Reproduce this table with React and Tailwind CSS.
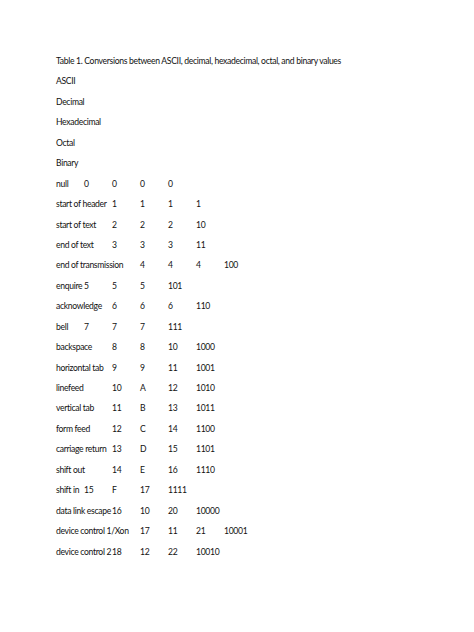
import React from "react";

const headings = ["ASCII", "Decimal", "Hexadecimal", "Octal", "Binary"];

// each cell: [text, tab stop index] (stops every 28px from the left margin)
const rows = [
  [["null", 0], ["0", 1], ["0", 2], ["0", 3], ["0", 4]],
  [["start of header", 0], ["1", 2], ["1", 3], ["1", 4], ["1", 5]],
  [["start of text", 0], ["2", 2], ["2", 3], ["2", 4], ["10", 5]],
  [["end of text", 0], ["3", 2], ["3", 3], ["3", 4], ["11", 5]],
  [["end of transmission", 0], ["4", 3], ["4", 4], ["4", 5], ["100", 6]],
  [["enquire", 0], ["5", 1], ["5", 2], ["5", 3], ["101", 4]],
  [["acknowledge", 0], ["6", 2], ["6", 3], ["6", 4], ["110", 5]],
  [["bell", 0], ["7", 1], ["7", 2], ["7", 3], ["111", 4]],
  [["backspace", 0], ["8", 2], ["8", 3], ["10", 4], ["1000", 5]],
  [["horizontal tab", 0], ["9", 2], ["9", 3], ["11", 4], ["1001", 5]],
  [["linefeed", 0], ["10", 2], ["A", 3], ["12", 4], ["1010", 5]],
  [["vertical tab", 0], ["11", 2], ["B", 3], ["13", 4], ["1011", 5]],
  [["form feed", 0], ["12", 2], ["C", 3], ["14", 4], ["1100", 5]],
  [["carriage return", 0], ["13", 2], ["D", 3], ["15", 4], ["1101", 5]],
  [["shift out", 0], ["14", 2], ["E", 3], ["16", 4], ["1110", 5]],
  [["shift in", 0], ["15", 1], ["F", 2], ["17", 3], ["1111", 4]],
  [["data link escape", 0], ["16", 2], ["10", 3], ["20", 4], ["10000", 5]],
  [["device control 1/Xon", 0], ["17", 3], ["11", 4], ["21", 5], ["10001", 6]],
  [["device control 2", 0], ["18", 2], ["12", 3], ["22", 4], ["10010", 5]],
];

const colStart = [
  "col-start-1",
  "col-start-2",
  "col-start-3",
  "col-start-4",
  "col-start-5",
  "col-start-6",
  "col-start-7",
  "col-start-8",
];

function Line({ children }) {
  return <p className="h-[20.45px] leading-[20.45px] whitespace-nowrap">{children}</p>;
}

export default function App() {
  return (
    <div
      className="w-[474px] h-[632px] bg-white text-[#111] pl-[56px] pt-[51px] text-[8.6px] tracking-[-0.32px] overflow-hidden"
      style={{ fontFamily: "Lato, 'Liberation Sans', sans-serif" }}
    >
      <Line>Table 1. Conversions between ASCII, decimal, hexadecimal, octal, and binary values</Line>
      {headings.map((h) => (
        <Line key={h}>{h}</Line>
      ))}
      {rows.map((row, i) => (
        <div
          key={i}
          className="grid grid-cols-[repeat(8,28px)] h-[20.45px] leading-[20.45px]"
        >
          {row.map(([text, stop], j) => (
            <span key={j} className={`${colStart[stop]} row-start-1 whitespace-nowrap`}>
              {text}
            </span>
          ))}
        </div>
      ))}
    </div>
  );
}
